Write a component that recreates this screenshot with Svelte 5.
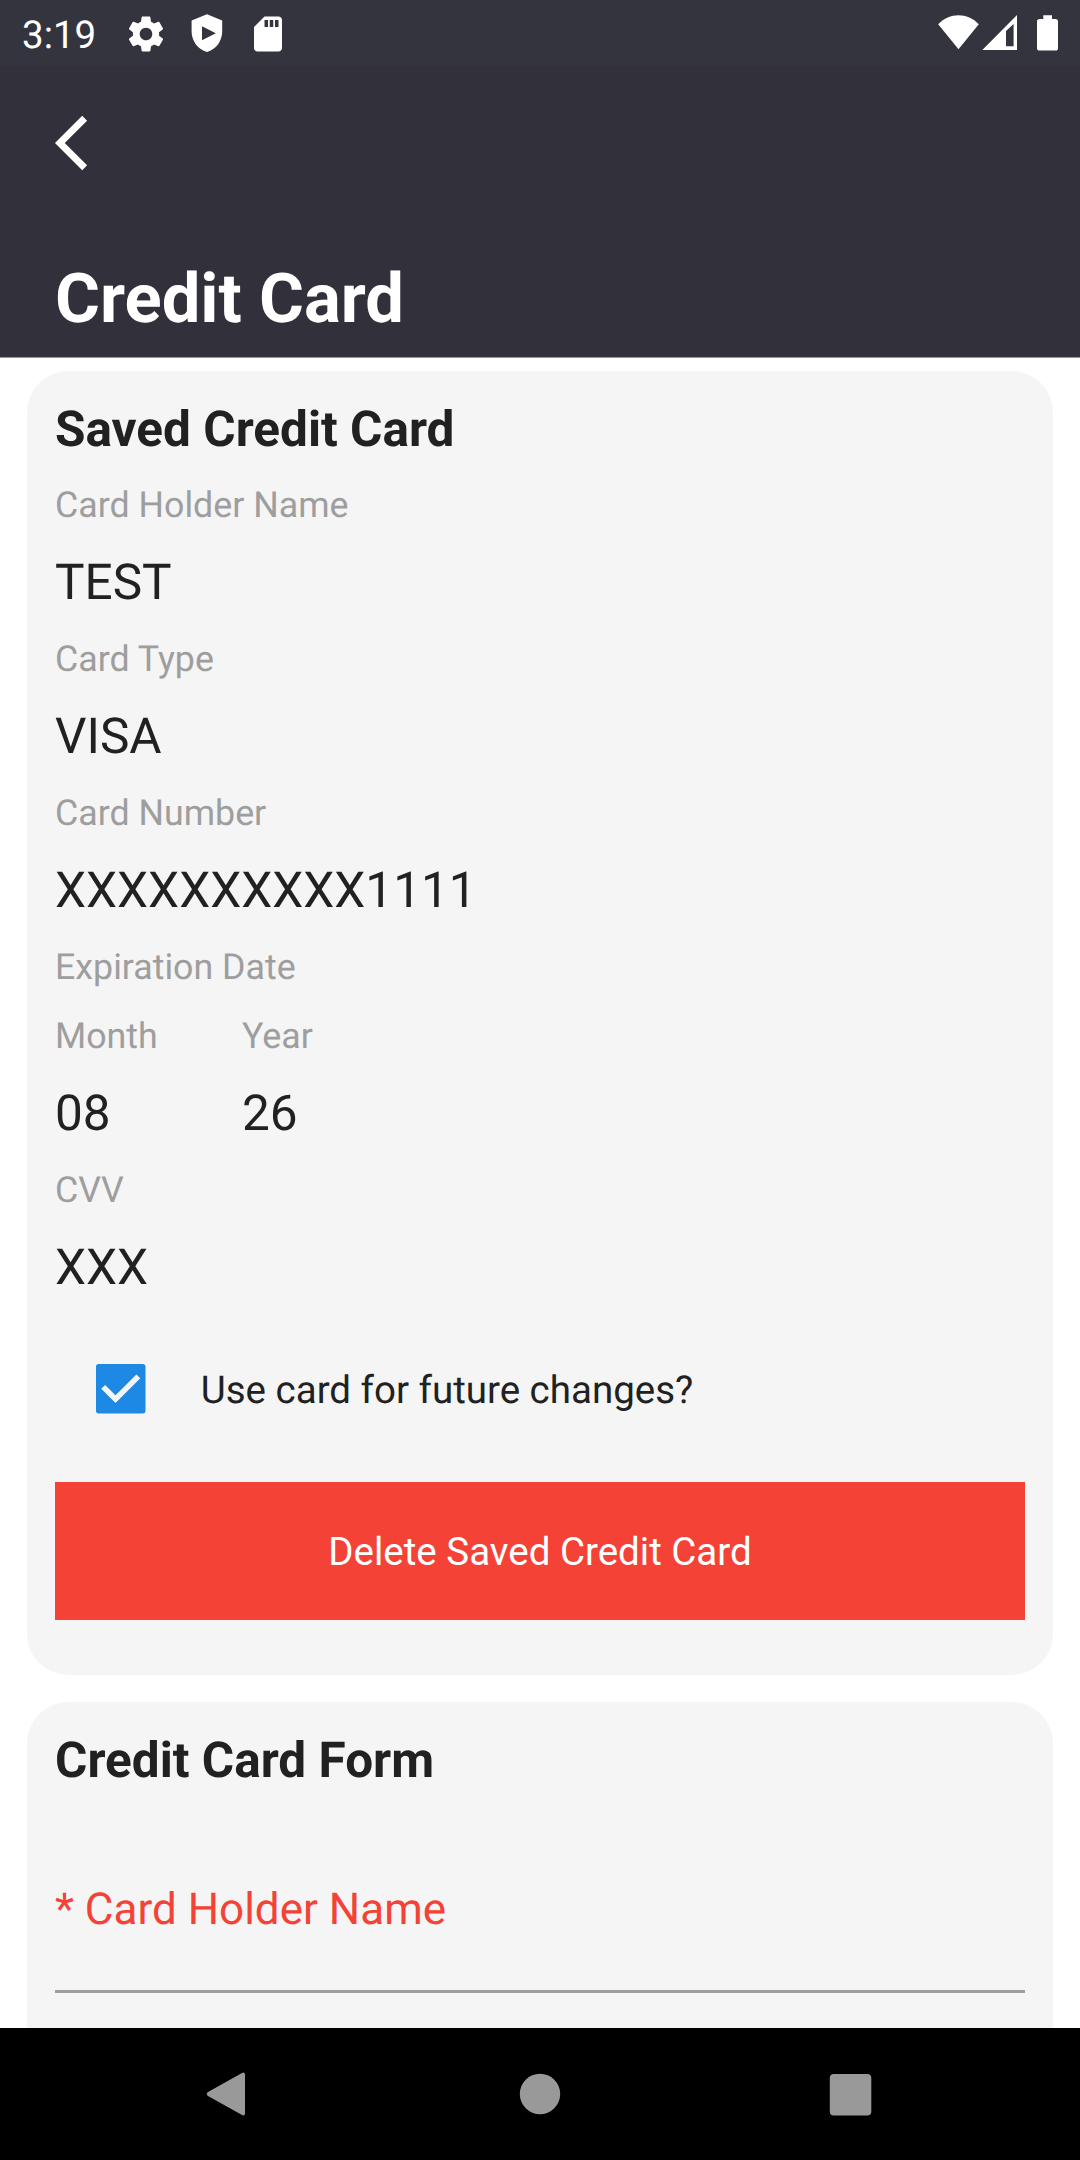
<script>
  const fields = [
    { label: 'Card Holder Name', value: 'TEST' },
    { label: 'Card Type', value: 'VISA' },
    { label: 'Card Number', value: 'XXXXXXXXXX1111' }
  ];
  const expiry = [
    { label: 'Month', value: '08' },
    { label: 'Year', value: '26' }
  ];
</script>

<div class="screen">
  <div class="status">
    <span class="clock">3:19</span>
    <svg class="gear" viewBox="0 0 24 24"><path d="M19.43 12.98c.04-.32.07-.64.07-.98s-.03-.66-.07-.98l2.11-1.65c.19-.15.24-.42.12-.64l-2-3.46c-.12-.22-.39-.3-.61-.22l-2.49 1c-.52-.4-1.08-.73-1.69-.98l-.38-2.65C14.46 2.18 14.25 2 14 2h-4c-.25 0-.46.18-.49.42l-.38 2.65c-.61.25-1.17.59-1.69.98l-2.49-1c-.23-.09-.49 0-.61.22l-2 3.46c-.13.22-.07.49.12.64l2.11 1.65c-.04.32-.07.65-.07.98s.03.66.07.98l-2.11 1.65c-.19.15-.24.42-.12.64l2 3.46c.12.22.39.3.61.22l2.49-1c.52.4 1.08.73 1.69.98l.38 2.65c.03.24.24.42.49.42h4c.25 0 .46-.18.49-.42l.38-2.65c.61-.25 1.17-.59 1.69-.98l2.49 1c.23.09.49 0 .61-.22l2-3.46c.12-.22.07-.49-.12-.64l-2.11-1.65zM12 15.6c-1.98 0-3.6-1.62-3.6-3.6s1.62-3.6 3.6-3.6 3.6 1.62 3.6 3.6-1.62 3.6-3.6 3.6z" /></svg>
    <svg class="shield" viewBox="0 0 32 38"><path fill-rule="evenodd" d="M16 0.3 L31.2 6.4 V17.5 C31.2 27 25 35.5 16 38 C7 35.5 0.6 27 0.6 17.5 V6.4 Z M11 12.2 V26.2 L24.8 19.2 Z" /></svg>
    <svg class="sd" viewBox="0 0 24 24"><path d="M18 2h-8L4.02 8 4 20c0 1.100.9 2 2 2h12c1.100 0 2-.9 2-2V4c0-1.100-.9-2-2-2zm-6 6h-2V4h2v4zm3 0h-2V4h2v4zm3 0h-2V4h2v4z" /></svg>
    <svg class="signals" viewBox="0 0 124 40">
      <path d="M0.200 10.200 C11.500-1.900 29.500-1.900 40.800 10.200 L20.500 35.300 Z" />
      <path fill-rule="evenodd" d="M79 1 V36 H44.300 Z M68 17 V32.300 H75.600 V10 Z" />
      <path d="M105.300 1.200 H114 V5 H117.500 Q120 5 120 7.500 V34 Q120 36.600 117.500 36.600 H101.500 Q99 36.600 99 34 V7.500 Q99 5 101.500 5 H105.300 Z" />
    </svg>
  </div>

  <header>
    <svg class="back" viewBox="0 0 24 24"><path d="M11.670 3.870L9.900 2.100 0 12l9.900 9.900 1.770-1.770L3.540 12z" /></svg>
    <h1>Credit Card</h1>
  </header>

  <main>
    <section class="card saved">
      <h2>Saved Credit Card</h2>
      {#each fields as f}
        <div class="label">{f.label}</div>
        <div class="value">{f.value}</div>
      {/each}
      <div class="label">Expiration Date</div>
      <div class="expiry">
        {#each expiry as f}
          <div>
            <div class="label">{f.label}</div>
            <div class="value">{f.value}</div>
          </div>
        {/each}
      </div>
      <div class="label">CVV</div>
      <div class="value">XXX</div>
      <div class="option">
        <svg class="box" viewBox="0 0 18 18"><rect width="18" height="18" rx="1" /><path d="M2.600 8.300 L7.100 12.800 L15.400 4.500" /></svg>
        <span>Use card for future changes?</span>
      </div>
      <button>Delete Saved Credit Card</button>
    </section>

    <section class="card form">
      <h2>Credit Card Form</h2>
      <div class="field">* Card Holder Name</div>
    </section>
  </main>

  <nav>
    <svg viewBox="0 0 48 48"><path d="M39 4.500 V43.500 Q38.500 46.300 36 45 L2 26 Q-0.500 24 2 22 L36 3 Q38.500 1.700 39 4.500 Z" /></svg>
    <svg viewBox="0 0 48 48"><circle cx="24" cy="24" r="20.200" /></svg>
    <svg viewBox="0 0 48 48"><rect x="3.800" y="4" width="41.500" height="41.500" rx="4" /></svg>
  </nav>
</div>

<style>
  :global(body) { background: #fff; }
  .screen {
    width: 1080px;
    height: 2160px;
    display: flex;
    flex-direction: column;
    overflow: hidden;
    background: #fff;
    color: #212121;
    font-family: Roboto, sans-serif;
    text-rendering: geometricPrecision;
  }
  svg { display: block; flex: none; }
  .status {
    flex: none;
    box-sizing: border-box;
    height: 66px;
    padding: 0 18px 0 22px;
    display: flex;
    align-items: flex-start;
    background: #34343e;
    color: #fff;
    fill: #fff;
  }
  .clock { width: 103px; padding-top: 13px; font-size: 38.5px; line-height: 45px; }
  .gear { width: 42px; height: 42px; margin-top: 12.500px; }
  .shield { width: 32px; height: 38px; margin: 14px 0 0 24px; }
  .sd { width: 42px; height: 42px; margin: 12.500px 0 0 24px; }
  .signals { width: 124px; height: 40px; margin: 14px 0 0 auto; }

  header {
    flex: none;
    box-sizing: border-box;
    height: 292px;
    padding: 44px 55px 0;
    border-bottom: 1px solid #98979c;
    background: #32313b;
    color: #fff;
    fill: #fff;
  }
  .back { width: 66px; height: 66px; }
  h1 { margin: 83px 0 0; font-size: 68.750px; line-height: 80px; font-weight: 700; }

  main { flex: 1; min-height: 0; overflow: hidden; padding: 13px 27px 0; }
  .card { border-radius: 41.250px; background: #f5f5f5; padding: 13.750px 28px 0; }
  .saved { padding-bottom: 55px; margin-bottom: 27.500px; }
  .form { height: 500px; }
  h2 { margin: 0; padding: 17px 0 10.500px; font-size: 49.500px; line-height: 57.750px; font-weight: 700; }
  .label { padding: 15px 0 12.500px; font-size: 35.750px; line-height: 41.250px; color: #9e9e9e; }
  .value { padding: 16.250px 0 11.250px; font-size: 49.500px; line-height: 57.750px; }
  .expiry { display: grid; grid-template-columns: 187px 187px; }
  .option {
    display: flex;
    align-items: center;
    gap: 55px;
    height: 49.500px;
    padding: 55.250px 0 68.500px 41.250px;
    font-size: 38.500px;
  }
  .option span { padding-top: 3px; }
  .box { width: 49.500px; height: 49.500px; fill: #1e88e5; }
  .box path { fill: none; stroke: #f5f5f5; stroke-width: 2; }
  button {
    display: block;
    width: 100%;
    height: 137.500px;
    padding: 2px 0 0;
    border: 0;
    background: #f44336;
    color: #fff;
    font: 38.500px Roboto, sans-serif;
  }
  .field {
    height: 107px;
    padding-top: 81.500px;
    border-bottom: 3px solid #9e9e9e;
    color: #f44336;
    font-size: 44px;
    line-height: 52px;
  }

  nav {
    flex: none;
    height: 132px;
    padding: 0 206px;
    display: flex;
    align-items: center;
    justify-content: space-between;
    background: #000;
    fill: #999;
  }
  nav svg { width: 48px; height: 48px; }
</style>
